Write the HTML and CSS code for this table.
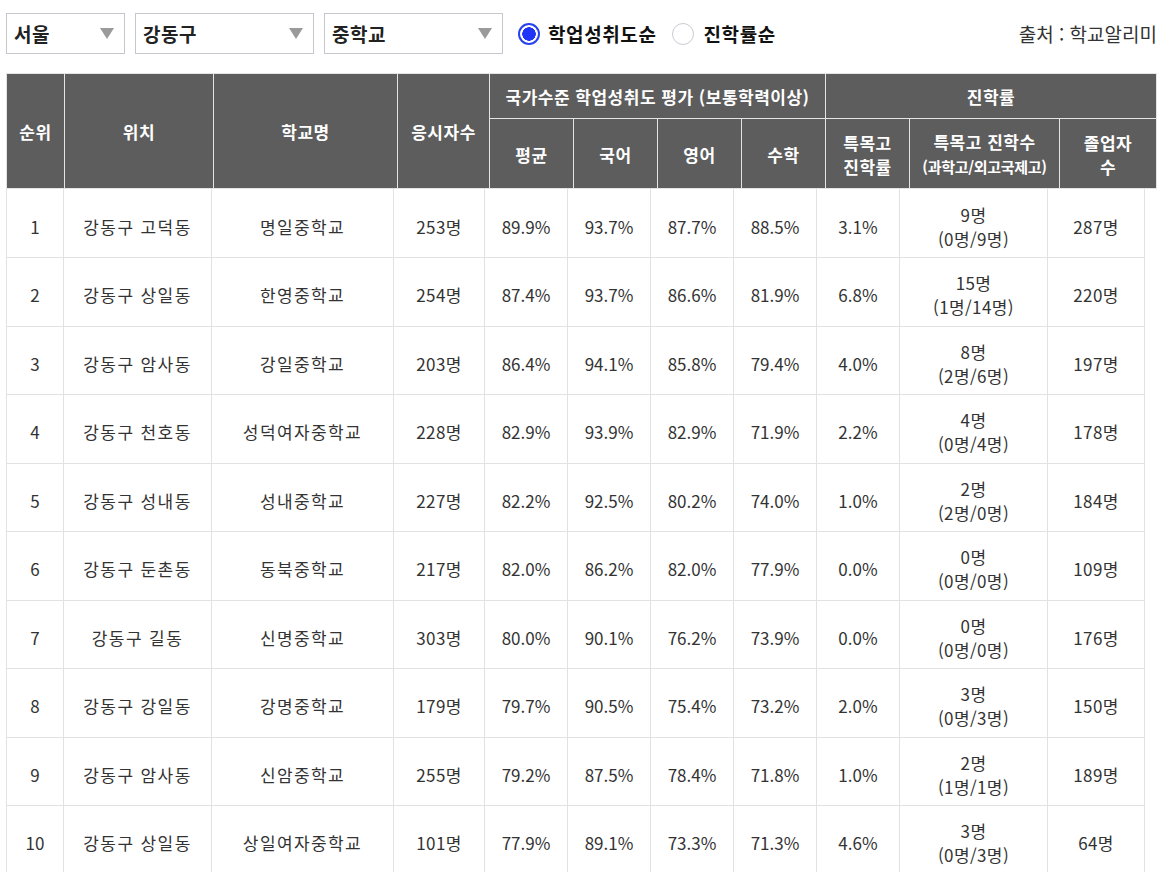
FILE: index.html
```html
<!DOCTYPE html>
<html lang="ko">
<head>
<meta charset="utf-8">
<link rel="stylesheet" href="styles.css">
</head>
<body>
<div class="page">
  <div class="toolbar">
    <div class="select s1"><span>서울</span><i class="arrow"></i></div>
    <div class="select s2"><span>강동구</span><i class="arrow"></i></div>
    <div class="select s3"><span>중학교</span><i class="arrow"></i></div>
    <label class="radio on"><i class="dot"></i><span>학업성취도순</span></label>
    <label class="radio"><i class="dot"></i><span>진학률순</span></label>
    <div class="source">출처 : 학교알리미</div>
  </div>

  <table class="head">
    <colgroup>
      <col style="width:58px"><col style="width:149px"><col style="width:184px"><col style="width:92px">
      <col style="width:84px"><col style="width:84px"><col style="width:84px"><col style="width:84px">
      <col style="width:84px"><col style="width:150px"><col style="width:97px">
    </colgroup>
    <tr class="r1">
      <th rowspan="2">순위</th>
      <th rowspan="2">위치</th>
      <th rowspan="2">학교명</th>
      <th rowspan="2">응시자수</th>
      <th colspan="4">국가수준 학업성취도 평가 (보통학력이상)</th>
      <th colspan="3">진학률</th>
    </tr>
    <tr class="r2">
      <th>평균</th>
      <th>국어</th>
      <th>영어</th>
      <th>수학</th>
      <th>특목고<br>진학률</th>
      <th>특목고 진학수<br><small>(과학고/외고국제고)</small></th>
      <th>졸업자<br>수</th>
    </tr>
  </table>

  <table class="body">
    <colgroup>
      <col style="width:57px"><col style="width:148px"><col style="width:182px"><col style="width:91px">
      <col style="width:83px"><col style="width:83px"><col style="width:83px"><col style="width:83px">
      <col style="width:83px"><col style="width:148px"><col style="width:97px">
    </colgroup>
    <tr><td>1</td><td>강동구 고덕동</td><td>명일중학교</td><td>253명</td><td>89.9%</td><td>93.7%</td><td>87.7%</td><td>88.5%</td><td>3.1%</td><td>9명<br>(0명/9명)</td><td>287명</td></tr>
    <tr><td>2</td><td>강동구 상일동</td><td>한영중학교</td><td>254명</td><td>87.4%</td><td>93.7%</td><td>86.6%</td><td>81.9%</td><td>6.8%</td><td>15명<br>(1명/14명)</td><td>220명</td></tr>
    <tr><td>3</td><td>강동구 암사동</td><td>강일중학교</td><td>203명</td><td>86.4%</td><td>94.1%</td><td>85.8%</td><td>79.4%</td><td>4.0%</td><td>8명<br>(2명/6명)</td><td>197명</td></tr>
    <tr><td>4</td><td>강동구 천호동</td><td>성덕여자중학교</td><td>228명</td><td>82.9%</td><td>93.9%</td><td>82.9%</td><td>71.9%</td><td>2.2%</td><td>4명<br>(0명/4명)</td><td>178명</td></tr>
    <tr><td>5</td><td>강동구 성내동</td><td>성내중학교</td><td>227명</td><td>82.2%</td><td>92.5%</td><td>80.2%</td><td>74.0%</td><td>1.0%</td><td>2명<br>(2명/0명)</td><td>184명</td></tr>
    <tr><td>6</td><td>강동구 둔촌동</td><td>동북중학교</td><td>217명</td><td>82.0%</td><td>86.2%</td><td>82.0%</td><td>77.9%</td><td>0.0%</td><td>0명<br>(0명/0명)</td><td>109명</td></tr>
    <tr><td>7</td><td>강동구 길동</td><td>신명중학교</td><td>303명</td><td>80.0%</td><td>90.1%</td><td>76.2%</td><td>73.9%</td><td>0.0%</td><td>0명<br>(0명/0명)</td><td>176명</td></tr>
    <tr><td>8</td><td>강동구 강일동</td><td>강명중학교</td><td>179명</td><td>79.7%</td><td>90.5%</td><td>75.4%</td><td>73.2%</td><td>2.0%</td><td>3명<br>(0명/3명)</td><td>150명</td></tr>
    <tr><td>9</td><td>강동구 암사동</td><td>신암중학교</td><td>255명</td><td>79.2%</td><td>87.5%</td><td>78.4%</td><td>71.8%</td><td>1.0%</td><td>2명<br>(1명/1명)</td><td>189명</td></tr>
    <tr><td>10</td><td>강동구 상일동</td><td>상일여자중학교</td><td>101명</td><td>77.9%</td><td>89.1%</td><td>73.3%</td><td>71.3%</td><td>4.6%</td><td>3명<br>(0명/3명)</td><td>64명</td></tr>
  </table>
</div>
</body>
</html>
```

FILE: styles.css
```css
html, body {
  margin: 0;
  padding: 0;
  background: #fff;
}
body {
  font-family: "Malgun Gothic", "Noto Sans CJK KR", "Noto Sans", sans-serif;
  color: #333;
}
.page {
  padding: 13px 0 0 6px;
  width: 1151px;
}
.toolbar {
  display: flex;
  align-items: center;
  height: 41px;
  margin-bottom: 19px;
}
.select {
  box-sizing: border-box;
  height: 41px;
  border: 1px solid #c4c7ce;
  display: flex;
  align-items: center;
  justify-content: space-between;
  padding: 0 10px 0 7px;
  font-size: 19px;
  letter-spacing: 0.5px;
  font-weight: bold;
  color: #222;
  margin-right: 10px;
}
.select span { line-height: 1; margin-top: -1px; }
.s1 { width: 119px; }
.s2 { width: 179px; }
.s3 { width: 179px; }
.arrow {
  width: 0;
  height: 0;
  border-left: 7px solid transparent;
  border-right: 7px solid transparent;
  border-top: 11px solid #9a9a9a;
}
.radio {
  display: flex;
  align-items: center;
  font-size: 19px;
  letter-spacing: 0.6px;
  font-weight: bold;
  color: #111;
  margin-left: 5px;
  margin-right: 12px;
}
.radio span { line-height: 1; margin-top: -1px; }
.radio .dot {
  box-sizing: border-box;
  width: 22px;
  height: 22px;
  border-radius: 50%;
  border: 1px solid #c8cbd2;
  background: #fff;
  margin-right: 9px;
}
.radio.on .dot {
  border: 2px solid #2743f0;
  background: radial-gradient(circle, #2035f5 0 6.5px, #fff 7px);
  margin-right: 8px;
}
.radio + .radio { margin-left: 4px; }
.source {
  margin-left: auto;
  font-size: 19px;
  color: #333;
  line-height: 1;
}

table {
  border-collapse: collapse;
  table-layout: fixed;
  text-align: center;
}
table.head {
  width: 1151px;
  border: 1px solid #dcdcdc;
  background: #5d5d5d;
}
table.head th {
  color: #fff;
  font-weight: bold;
  font-size: 17px;
  letter-spacing: 0.5px;
  border: 1px solid #e4e4e4;
  padding: 2px 0 0;
  line-height: 24px;
}
table.head tr.r1 { height: 45px; }
table.head tr.r2 { height: 70px; }
table.head small {
  font-size: 15px;
  letter-spacing: -0.3px;
}
table.body {
  width: 1139px;
  border: 1px solid #e2e2e2;
  border-top: none;
}
table.body tr { height: 68.5px; }
table.body td {
  border: 1px solid #e2e2e2;
  border-top: none;
  padding: 7px 0 0;
  font-size: 17px;
  line-height: 24px;
  color: #333;
}
table.body td:nth-child(2),
table.body td:nth-child(3) {
  letter-spacing: 1.4px;
}
table.body td:nth-child(4),
table.body td:nth-child(10),
table.body td:nth-child(11) {
  letter-spacing: 0.4px;
}
```
